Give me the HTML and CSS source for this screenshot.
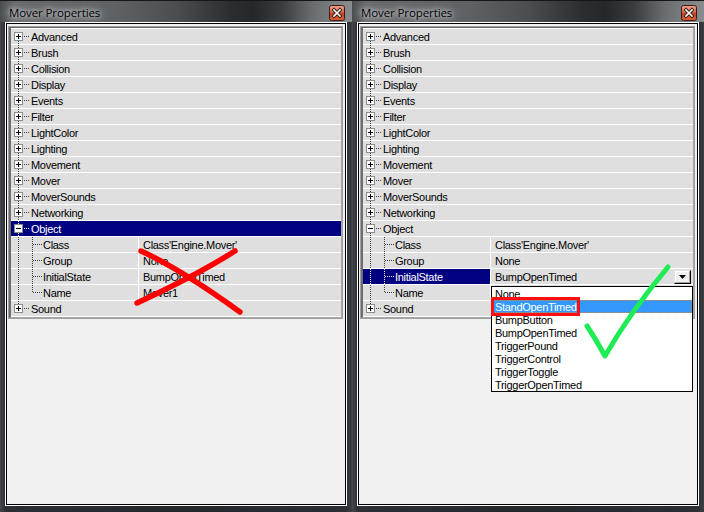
FILE: index.html
```html
<!DOCTYPE html>
<html>
<head>
<meta charset="utf-8">
<title>Mover Properties</title>
<link rel="stylesheet" href="styles.css">
</head>
<body>
<div class="desk">

  <!-- LEFT WINDOW -->
  <div class="window">
    <div class="titlebar">
      <span class="title">Mover Properties</span>
      <svg class="close" width="16" height="16" viewBox="0 0 16 16">
        <defs>
          <linearGradient id="cgA" x1="0" y1="0" x2="0" y2="1">
            <stop offset="0" stop-color="#eaa28b"/>
            <stop offset="0.45" stop-color="#d56a4f"/>
            <stop offset="0.5" stop-color="#c2401f"/>
            <stop offset="1" stop-color="#dc5c3b"/>
          </linearGradient>
        </defs>
        <rect x="0.5" y="0.5" width="15" height="15" rx="2" fill="url(#cgA)" stroke="#3b1c15"/>
        <path d="M5 5L11 11M11 5L5 11" stroke="#3a1a12" stroke-width="3.4" stroke-linecap="square"/>
        <path d="M5 5L11 11M11 5L5 11" stroke="#fff" stroke-width="1.6" stroke-linecap="square"/>
      </svg>
    </div>
    <div class="frame">
      <div class="client">
        <div class="grid">
          <div class="rows">
            <div class="row cat"><div class="name"><svg class="tree" width="20" height="15"><path class="dots" d="M7.5 12V15M13 7.5H19"/><rect class="box" x="3.5" y="3.5" width="8" height="8"/><path class="pm" d="M5 7.5H10M7.5 5V10"/></svg><span class="label">Advanced</span></div></div>
            <div class="row cat"><div class="name"><svg class="tree" width="20" height="15"><path class="dots" d="M7.5 0V3M7.5 12V15M13 7.5H19"/><rect class="box" x="3.5" y="3.5" width="8" height="8"/><path class="pm" d="M5 7.5H10M7.5 5V10"/></svg><span class="label">Brush</span></div></div>
            <div class="row cat"><div class="name"><svg class="tree" width="20" height="15"><path class="dots" d="M7.5 0V3M7.5 12V15M13 7.5H19"/><rect class="box" x="3.5" y="3.5" width="8" height="8"/><path class="pm" d="M5 7.5H10M7.5 5V10"/></svg><span class="label">Collision</span></div></div>
            <div class="row cat"><div class="name"><svg class="tree" width="20" height="15"><path class="dots" d="M7.5 0V3M7.5 12V15M13 7.5H19"/><rect class="box" x="3.5" y="3.5" width="8" height="8"/><path class="pm" d="M5 7.5H10M7.5 5V10"/></svg><span class="label">Display</span></div></div>
            <div class="row cat"><div class="name"><svg class="tree" width="20" height="15"><path class="dots" d="M7.5 0V3M7.5 12V15M13 7.5H19"/><rect class="box" x="3.5" y="3.5" width="8" height="8"/><path class="pm" d="M5 7.5H10M7.5 5V10"/></svg><span class="label">Events</span></div></div>
            <div class="row cat"><div class="name"><svg class="tree" width="20" height="15"><path class="dots" d="M7.5 0V3M7.5 12V15M13 7.5H19"/><rect class="box" x="3.5" y="3.5" width="8" height="8"/><path class="pm" d="M5 7.5H10M7.5 5V10"/></svg><span class="label">Filter</span></div></div>
            <div class="row cat"><div class="name"><svg class="tree" width="20" height="15"><path class="dots" d="M7.5 0V3M7.5 12V15M13 7.5H19"/><rect class="box" x="3.5" y="3.5" width="8" height="8"/><path class="pm" d="M5 7.5H10M7.5 5V10"/></svg><span class="label">LightColor</span></div></div>
            <div class="row cat"><div class="name"><svg class="tree" width="20" height="15"><path class="dots" d="M7.5 0V3M7.5 12V15M13 7.5H19"/><rect class="box" x="3.5" y="3.5" width="8" height="8"/><path class="pm" d="M5 7.5H10M7.5 5V10"/></svg><span class="label">Lighting</span></div></div>
            <div class="row cat"><div class="name"><svg class="tree" width="20" height="15"><path class="dots" d="M7.5 0V3M7.5 12V15M13 7.5H19"/><rect class="box" x="3.5" y="3.5" width="8" height="8"/><path class="pm" d="M5 7.5H10M7.5 5V10"/></svg><span class="label">Movement</span></div></div>
            <div class="row cat"><div class="name"><svg class="tree" width="20" height="15"><path class="dots" d="M7.5 0V3M7.5 12V15M13 7.5H19"/><rect class="box" x="3.5" y="3.5" width="8" height="8"/><path class="pm" d="M5 7.5H10M7.5 5V10"/></svg><span class="label">Mover</span></div></div>
            <div class="row cat"><div class="name"><svg class="tree" width="20" height="15"><path class="dots" d="M7.5 0V3M7.5 12V15M13 7.5H19"/><rect class="box" x="3.5" y="3.5" width="8" height="8"/><path class="pm" d="M5 7.5H10M7.5 5V10"/></svg><span class="label">MoverSounds</span></div></div>
            <div class="row cat"><div class="name"><svg class="tree" width="20" height="15"><path class="dots" d="M7.5 0V3M7.5 12V15M13 7.5H19"/><rect class="box" x="3.5" y="3.5" width="8" height="8"/><path class="pm" d="M5 7.5H10M7.5 5V10"/></svg><span class="label">Networking</span></div></div>
            <div class="row cat sel"><div class="name"><svg class="tree" width="20" height="15"><path class="dots" d="M7.5 0V3M7.5 12V15M13 7.5H19"/><rect class="box" x="3.5" y="3.5" width="8" height="8"/><path class="pm" d="M5 7.5H10"/></svg><span class="label">Object</span></div></div>
            <div class="row prop"><div class="name"><svg class="tree" width="32" height="15"><path class="dots" d="M7.5 0V15M21.5 0V15M22 7.5H31"/></svg><span class="label">Class</span></div><div class="value"><span class="label">Class'Engine.Mover'</span></div></div>
            <div class="row prop"><div class="name"><svg class="tree" width="32" height="15"><path class="dots" d="M7.5 0V15M21.5 0V15M22 7.5H31"/></svg><span class="label">Group</span></div><div class="value"><span class="label">None</span></div></div>
            <div class="row prop"><div class="name"><svg class="tree" width="32" height="15"><path class="dots" d="M7.5 0V15M21.5 0V15M22 7.5H31"/></svg><span class="label">InitialState</span></div><div class="value"><span class="label">BumpOpenTimed</span></div></div>
            <div class="row prop"><div class="name"><svg class="tree" width="32" height="15"><path class="dots" d="M7.5 0V15M21.5 0V8M22 7.5H31"/></svg><span class="label">Name</span></div><div class="value"><span class="label">Mover1</span></div></div>
            <div class="row cat"><div class="name"><svg class="tree" width="20" height="15"><path class="dots" d="M7.5 0V3M13 7.5H19"/><rect class="box" x="3.5" y="3.5" width="8" height="8"/><path class="pm" d="M5 7.5H10M7.5 5V10"/></svg><span class="label">Sound</span></div></div>
          </div>
        </div>
      </div>
    </div>
    <svg class="annot" width="352" height="512" viewBox="0 0 352 512">
      <path d="M141 251C165 262 200 283 240 312" class="xmark"/>
      <path d="M137 303C165 290 205 270 235 251" class="xmark"/>
    </svg>
  </div>

  <!-- RIGHT WINDOW -->
  <div class="window">
    <div class="titlebar">
      <span class="title">Mover Properties</span>
      <svg class="close" width="16" height="16" viewBox="0 0 16 16">
        <defs>
          <linearGradient id="cgB" x1="0" y1="0" x2="0" y2="1">
            <stop offset="0" stop-color="#eaa28b"/>
            <stop offset="0.45" stop-color="#d56a4f"/>
            <stop offset="0.5" stop-color="#c2401f"/>
            <stop offset="1" stop-color="#dc5c3b"/>
          </linearGradient>
        </defs>
        <rect x="0.5" y="0.5" width="15" height="15" rx="2" fill="url(#cgB)" stroke="#3b1c15"/>
        <path d="M5 5L11 11M11 5L5 11" stroke="#3a1a12" stroke-width="3.4" stroke-linecap="square"/>
        <path d="M5 5L11 11M11 5L5 11" stroke="#fff" stroke-width="1.6" stroke-linecap="square"/>
      </svg>
    </div>
    <div class="frame">
      <div class="client">
        <div class="grid">
          <div class="rows">
            <div class="row cat"><div class="name"><svg class="tree" width="20" height="15"><path class="dots" d="M7.5 12V15M13 7.5H19"/><rect class="box" x="3.5" y="3.5" width="8" height="8"/><path class="pm" d="M5 7.5H10M7.5 5V10"/></svg><span class="label">Advanced</span></div></div>
            <div class="row cat"><div class="name"><svg class="tree" width="20" height="15"><path class="dots" d="M7.5 0V3M7.5 12V15M13 7.5H19"/><rect class="box" x="3.5" y="3.5" width="8" height="8"/><path class="pm" d="M5 7.5H10M7.5 5V10"/></svg><span class="label">Brush</span></div></div>
            <div class="row cat"><div class="name"><svg class="tree" width="20" height="15"><path class="dots" d="M7.5 0V3M7.5 12V15M13 7.5H19"/><rect class="box" x="3.5" y="3.5" width="8" height="8"/><path class="pm" d="M5 7.5H10M7.5 5V10"/></svg><span class="label">Collision</span></div></div>
            <div class="row cat"><div class="name"><svg class="tree" width="20" height="15"><path class="dots" d="M7.5 0V3M7.5 12V15M13 7.5H19"/><rect class="box" x="3.5" y="3.5" width="8" height="8"/><path class="pm" d="M5 7.5H10M7.5 5V10"/></svg><span class="label">Display</span></div></div>
            <div class="row cat"><div class="name"><svg class="tree" width="20" height="15"><path class="dots" d="M7.5 0V3M7.5 12V15M13 7.5H19"/><rect class="box" x="3.5" y="3.5" width="8" height="8"/><path class="pm" d="M5 7.5H10M7.5 5V10"/></svg><span class="label">Events</span></div></div>
            <div class="row cat"><div class="name"><svg class="tree" width="20" height="15"><path class="dots" d="M7.5 0V3M7.5 12V15M13 7.5H19"/><rect class="box" x="3.5" y="3.5" width="8" height="8"/><path class="pm" d="M5 7.5H10M7.5 5V10"/></svg><span class="label">Filter</span></div></div>
            <div class="row cat"><div class="name"><svg class="tree" width="20" height="15"><path class="dots" d="M7.5 0V3M7.5 12V15M13 7.5H19"/><rect class="box" x="3.5" y="3.5" width="8" height="8"/><path class="pm" d="M5 7.5H10M7.5 5V10"/></svg><span class="label">LightColor</span></div></div>
            <div class="row cat"><div class="name"><svg class="tree" width="20" height="15"><path class="dots" d="M7.5 0V3M7.5 12V15M13 7.5H19"/><rect class="box" x="3.5" y="3.5" width="8" height="8"/><path class="pm" d="M5 7.5H10M7.5 5V10"/></svg><span class="label">Lighting</span></div></div>
            <div class="row cat"><div class="name"><svg class="tree" width="20" height="15"><path class="dots" d="M7.5 0V3M7.5 12V15M13 7.5H19"/><rect class="box" x="3.5" y="3.5" width="8" height="8"/><path class="pm" d="M5 7.5H10M7.5 5V10"/></svg><span class="label">Movement</span></div></div>
            <div class="row cat"><div class="name"><svg class="tree" width="20" height="15"><path class="dots" d="M7.5 0V3M7.5 12V15M13 7.5H19"/><rect class="box" x="3.5" y="3.5" width="8" height="8"/><path class="pm" d="M5 7.5H10M7.5 5V10"/></svg><span class="label">Mover</span></div></div>
            <div class="row cat"><div class="name"><svg class="tree" width="20" height="15"><path class="dots" d="M7.5 0V3M7.5 12V15M13 7.5H19"/><rect class="box" x="3.5" y="3.5" width="8" height="8"/><path class="pm" d="M5 7.5H10M7.5 5V10"/></svg><span class="label">MoverSounds</span></div></div>
            <div class="row cat"><div class="name"><svg class="tree" width="20" height="15"><path class="dots" d="M7.5 0V3M7.5 12V15M13 7.5H19"/><rect class="box" x="3.5" y="3.5" width="8" height="8"/><path class="pm" d="M5 7.5H10M7.5 5V10"/></svg><span class="label">Networking</span></div></div>
            <div class="row cat"><div class="name"><svg class="tree" width="20" height="15"><path class="dots" d="M7.5 0V3M7.5 12V15M13 7.5H19"/><rect class="box" x="3.5" y="3.5" width="8" height="8"/><path class="pm" d="M5 7.5H10"/></svg><span class="label">Object</span></div></div>
            <div class="row prop"><div class="name"><svg class="tree" width="32" height="15"><path class="dots" d="M7.5 0V15M21.5 0V15M22 7.5H31"/></svg><span class="label">Class</span></div><div class="value"><span class="label">Class'Engine.Mover'</span></div></div>
            <div class="row prop"><div class="name"><svg class="tree" width="32" height="15"><path class="dots" d="M7.5 0V15M21.5 0V15M22 7.5H31"/></svg><span class="label">Group</span></div><div class="value"><span class="label">None</span></div></div>
            <div class="row prop"><div class="name sel"><svg class="tree" width="32" height="15"><path class="dots" d="M7.5 0V15M21.5 0V15M22 7.5H31"/></svg><span class="label">InitialState</span></div><div class="value combo"><span class="label">BumpOpenTimed</span><span class="ddbtn"><svg width="7" height="4" viewBox="0 0 7 4"><path d="M0 0H7L3.5 4Z" fill="#000"/></svg></span>
              <div class="ddlist">
                <div class="item">None</div>
                <div class="item hi">StandOpenTimed</div>
                <div class="item">BumpButton</div>
                <div class="item">BumpOpenTimed</div>
                <div class="item">TriggerPound</div>
                <div class="item">TriggerControl</div>
                <div class="item">TriggerToggle</div>
                <div class="item">TriggerOpenTimed</div>
                <div class="redbox"></div>
              </div>
            </div></div>
            <div class="row prop"><div class="name"><svg class="tree" width="32" height="15"><path class="dots" d="M7.5 0V15M21.5 0V8M22 7.5H31"/></svg><span class="label">Name</span></div><div class="value"></div></div>
            <div class="row cat"><div class="name"><svg class="tree" width="20" height="15"><path class="dots" d="M7.5 0V3M13 7.5H19"/><rect class="box" x="3.5" y="3.5" width="8" height="8"/><path class="pm" d="M5 7.5H10M7.5 5V10"/></svg><span class="label">Sound</span></div></div>
          </div>
        </div>
      </div>
    </div>
    <svg class="annot" width="352" height="512" viewBox="0 0 352 512">
      <path d="M235 326C243 338 248 347 253 356C268 330 290 298 316 267" class="check"/>
    </svg>
  </div>

</div>
</body>
</html>
```

FILE: styles.css
```css
* { box-sizing: border-box; }

html, body {
  margin: 0;
  padding: 0;
}

body {
  width: 704px;
  height: 512px;
  overflow: hidden;
  background: #1f2225;
  font-family: "Liberation Sans", Arial, sans-serif;
  font-size: 11px;
  color: #000;
}

.desk {
  display: flex;
  width: 704px;
  height: 512px;
}

.window {
  position: relative;
  width: 352px;
  height: 512px;
  display: flex;
  flex-direction: column;
  background: linear-gradient(90deg, #45484c 0, #2c2f33 1.5%, #25282b 50%, #2b2e32 98%, #3a3d41 100%);
}

.titlebar {
  height: 22px;
  flex: none;
  display: flex;
  justify-content: space-between;
  align-items: flex-start;
  padding: 0 7px 0 9px;
  border-top: 1px solid #151719;
  background: linear-gradient(90deg, #4a4d50 0%, #63666a 4%, #5f6265 33%, #4b4e51 50%, #2a2d30 66%, #25282b 72%, #3a3d40 80%, #6b6e71 89%, #8a8d90 100%);
}

.title {
  font-family: "Open Sans", "Liberation Sans", sans-serif;
  font-size: 11.5px;
  line-height: 17px;
  padding-top: 3px;
  color: #000;
  letter-spacing: -0.1px;
  text-shadow: 0 0 8px rgba(255, 255, 255, 0.9), 0 0 4px rgba(255, 255, 255, 0.75), 0 0 16px rgba(255, 255, 255, 0.55);
}

.close {
  display: block;
  margin-top: 4px;
  flex: none;
}

.frame {
  flex: 1;
  display: flex;
  margin: 0 5px 6px;
  border: 1px solid #fff;
}

.client {
  flex: 1;
  border: 1px solid #000;
  background: #f0f0f0;
  padding: 2px 2px 0 1px;
}

.grid {
  border: 1px solid #a0a0a0;
}

.rows {
  border-style: solid;
  border-width: 1px 1px 1px 2px;
  border-color: #696969 #a8a8a8 #a8a8a8 #6e6e6e;
  background: #fff;
  padding-top: 1px;
}

.row {
  display: flex;
  height: 16px;
  border-bottom: 1px solid #fff;
  background: #dfdfdf;
}

.name {
  display: flex;
  align-items: flex-start;
  height: 15px;
  overflow: visible;
}

.cat .name {
  flex: 1;
}

.prop .name {
  width: 128px;
  flex: none;
  border-right: 1px solid #fff;
}

.value {
  flex: 1;
  height: 15px;
  padding-left: 4px;
  display: flex;
  align-items: flex-start;
}

.label {
  line-height: 13px;
  padding-top: 2px;
  white-space: nowrap;
  letter-spacing: -0.3px;
}

.tree {
  display: block;
  flex: none;
  shape-rendering: crispEdges;
}

.tree .dots {
  fill: none;
  stroke: #404040;
  stroke-dasharray: 1 1;
}

.tree .box {
  fill: #fff;
  stroke: #8c8c8c;
}

.tree .pm {
  stroke: #000;
  fill: none;
}

.sel {
  background: #000080;
  color: #fff;
}

.sel .tree .dots {
  stroke: #e6e6e6;
}

/* combo editor in the right window */
.combo {
  position: relative;
  justify-content: space-between;
  padding-right: 2px;
}

.ddbtn {
  width: 17px;
  height: 14px;
  margin-top: 1px;
  display: flex;
  align-items: center;
  justify-content: center;
  background: #f0f0f0;
  border: 1px solid;
  border-color: #e3e3e3 #000 #000 #e3e3e3;
  box-shadow: inset -1px -1px 0 #a0a0a0, inset 1px 1px 0 #fff;
}

.ddbtn svg {
  display: block;
}

.ddlist {
  position: absolute;
  left: 0;
  right: 0;
  top: 17px;
  background: #fff;
  border: 1px solid #000;
  z-index: 2;
}

.item {
  height: 13px;
  line-height: 12px;
  padding-top: 1px;
  padding-left: 3px;
  white-space: nowrap;
  letter-spacing: -0.3px;
  color: #000;
}

.item.hi {
  background: #3399ff;
  color: #fff;
  outline: 1px dotted #d9823b;
  outline-offset: -1px;
}

.redbox {
  position: absolute;
  left: -1px;
  top: 10px;
  width: 89px;
  height: 19px;
  border: 3px solid #ff1010;
}

/* hand-drawn annotations */
.annot {
  position: absolute;
  left: 0;
  top: 0;
  pointer-events: none;
  z-index: 3;
}

.xmark {
  fill: none;
  stroke: #ff0000;
  stroke-width: 5.5;
  stroke-linecap: round;
  stroke-linejoin: round;
}

.check {
  fill: none;
  stroke: #1eec55;
  stroke-width: 5;
  stroke-linecap: round;
  stroke-linejoin: round;
}
```
